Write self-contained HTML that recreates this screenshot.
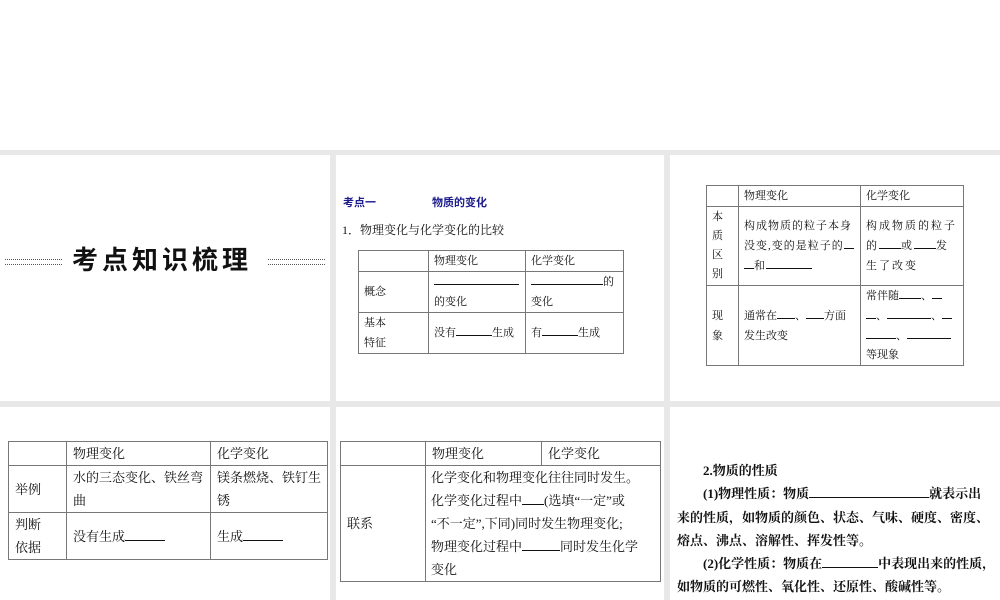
<!DOCTYPE html>
<html><head><meta charset="utf-8"><style>
*{margin:0;padding:0;box-sizing:border-box}
body{width:1000px;height:600px;position:relative;background:#fff;overflow:hidden;font-family:"Liberation Serif","Noto Serif CJK SC","Noto Sans CJK SC",serif;color:#111}
.band{position:absolute;left:0;top:150px;width:1000px;height:450px;background:#e8e8e8}
.p{position:absolute;background:#fff}
.a{position:absolute;white-space:nowrap}
table{position:absolute;border-collapse:collapse;table-layout:fixed}
td{border:1px solid #777;vertical-align:middle;padding:0 5px;line-height:20px}
.t1 td{font-size:11px}
.t2 td{font-size:13px;line-height:23px;padding:0 6px}
.u{display:inline-block;border-bottom:1px solid #111;height:13px;vertical-align:baseline}
.dots{position:absolute;height:6px;border-top:1px dotted #555;border-bottom:1px dotted #555}
</style></head><body>
<div class="band"></div>
<div class="p" style="left:0;top:155px;width:330px;height:246px"></div>
<div class="p" style="left:336px;top:155px;width:328px;height:246px"></div>
<div class="p" style="left:670px;top:155px;width:330px;height:246px"></div>
<div class="p" style="left:0;top:407px;width:330px;height:193px"></div>
<div class="p" style="left:336px;top:407px;width:328px;height:193px"></div>
<div class="p" style="left:670px;top:407px;width:330px;height:193px"></div>

<div class="dots" style="left:5px;top:259px;width:57px"></div>
<div class="dots" style="left:268px;top:259px;width:57px"></div>
<div class="a" style="left:72px;top:244px;font:bold 26px 'Noto Sans CJK SC',sans-serif;letter-spacing:4px;line-height:30px">考点知识梳理</div>

<div class="a" style="left:343px;top:194px;font:bold 11px 'Noto Sans CJK SC',sans-serif;color:#1c1c8c">考点一</div>
<div class="a" style="left:432px;top:194px;font:bold 11px 'Noto Sans CJK SC',sans-serif;color:#1c1c8c">物质的变化</div>
<div class="a" style="left:342px;top:221px;font-size:12px">1．物理变化与化学变化的比较</div>

<table class="t1" style="left:358px;top:250px;width:265px">
<col style="width:70px"><col style="width:97px"><col style="width:98px">
<tr style="height:21px"><td></td><td>物理变化</td><td>化学变化</td></tr>
<tr style="height:41px"><td>概念</td><td><span class="u" style="width:85px"></span><br>的变化</td><td><span class="u" style="width:72px"></span>的<br>变化</td></tr>
<tr style="height:41px"><td>基本<br>特征</td><td>没有<span class="u" style="width:36px"></span>生成</td><td>有<span class="u" style="width:36px"></span>生成</td></tr>
</table>

<table class="t1" style="left:706px;top:185px;width:257px">
<col style="width:32px"><col style="width:122px"><col style="width:103px">
<tr style="height:19px"><td></td><td>物理变化</td><td>化学变化</td></tr>
<tr style="height:79px"><td style="line-height:19px">本<br>质<br>区<br>别</td><td style="letter-spacing:1px">构成物质的粒子本身<br>没变,变的是粒子的<span class="u" style="width:10px"></span><br><span class="u" style="width:10px"></span>和<span class="u" style="width:46px"></span></td><td style="letter-spacing:2px">构成物质的粒子<br>的<span class="u" style="width:22px"></span>或<span class="u" style="width:22px"></span>发<br>生了改变</td></tr>
<tr style="height:77px"><td>现<br>象</td><td>通常在<span class="u" style="width:18px"></span>、<span class="u" style="width:18px"></span>方面<br>发生改变</td><td style="line-height:19px">常伴随<span class="u" style="width:22px"></span>、<span class="u" style="width:10px"></span><br><span class="u" style="width:10px"></span>、<span class="u" style="width:44px"></span>、<span class="u" style="width:10px"></span><br><span class="u" style="width:30px"></span>、<span class="u" style="width:44px"></span><br>等现象</td></tr>
</table>

<table class="t2" style="left:8px;top:441px;width:319px">
<col style="width:58px"><col style="width:144px"><col style="width:117px">
<tr style="height:23px"><td></td><td>物理变化</td><td>化学变化</td></tr>
<tr style="height:47px"><td>举例</td><td>水的三态变化、铁丝弯<br>曲</td><td>镁条燃烧、铁钉生<br>锈</td></tr>
<tr style="height:45px"><td>判断<br>依据</td><td>没有生成<span class="u" style="width:40px"></span></td><td>生成<span class="u" style="width:40px"></span></td></tr>
</table>

<table class="t2" style="left:340px;top:441px;width:320px">
<col style="width:85px"><col style="width:116px"><col style="width:119px">
<tr style="height:23px"><td></td><td>物理变化</td><td>化学变化</td></tr>
<tr style="height:114px"><td>联系</td><td colspan="2" style="padding:0 5px">化学变化和物理变化往往同时发生。<br>化学变化过程中<span class="u" style="width:22px"></span>(选填“一定”或<br>“不一定”,下同)同时发生物理变化;<br>物理变化过程中<span class="u" style="width:38px"></span>同时发生化学<br>变化</td></tr>
</table>

<div class="a" style="left:677px;top:459px;width:320px;font-size:13px;font-weight:bold;line-height:23.3px;white-space:normal">
<div style="padding-left:26px">2.物质的性质</div>
<div style="padding-left:26px">(1)物理性质：物质<span class="u" style="width:120px"></span>就表示出</div>
<div>来的性质，如物质的颜色、状态、气味、硬度、密度、</div>
<div>熔点、沸点、溶解性、挥发性等。</div>
<div style="padding-left:26px">(2)化学性质：物质在<span class="u" style="width:56px"></span>中表现出来的性质，</div>
<div>如物质的可燃性、氧化性、还原性、酸碱性等。</div>
</div>
</body></html>
